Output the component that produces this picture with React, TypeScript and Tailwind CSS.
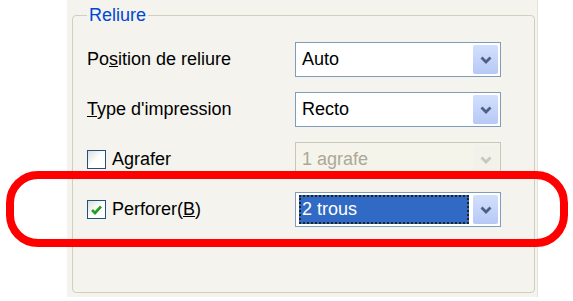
import React from "react";

function Chevron({ color = "#4D6185" }: { color?: string }) {
  return (
    <svg width="12" height="8" viewBox="0 0 12 8">
      <path d="M1.5 1.5 L6 6 L10.5 1.5" fill="none" stroke={color} strokeWidth="2.8" />
    </svg>
  );
}

function Combo({
  value,
  disabled = false,
  selected = false,
}: {
  value: string;
  disabled?: boolean;
  selected?: boolean;
}) {
  return (
    <div
      className={
        disabled
          ? "flex h-[35px] w-[206px] items-center border border-[#C9C7BA] bg-[#F5F4EA]"
          : "flex h-[35px] w-[206px] items-center border border-[#7F9DB9] bg-white"
      }
    >
      {selected ? (
        <div className="ml-[3px] mr-[4px] flex h-[29px] flex-1 items-center bg-[#316AC5] pl-[3px] text-white outline-2 outline-dotted outline-[#222] -outline-offset-2">
          {value}
        </div>
      ) : (
        <div className={disabled ? "flex-1 pl-[6px] text-[#ACA899]" : "flex-1 pl-[6px] text-black"}>{value}</div>
      )}
      <div
        className={
          disabled
            ? "mr-[2px] flex h-[29px] w-[25px] items-center justify-center rounded-[2px] bg-[#F3F2EA]"
            : "mr-[2px] flex h-[29px] w-[25px] items-center justify-center rounded-[2px] bg-gradient-to-b from-[#D3DFFD] to-[#B6C9F6]"
        }
      >
        <Chevron color={disabled ? "#C9C7BA" : "#4D6185"} />
      </div>
    </div>
  );
}

function Checkbox({ checked }: { checked: boolean }) {
  return (
    <div className="flex h-[19px] w-[19px] items-center justify-center border border-[#1C5180] bg-gradient-to-br from-[#DCDCD7] via-white to-white">
      {checked && (
        <svg width="13" height="12" viewBox="0 0 13 12">
          <path d="M2 6 L5 9 L11 2.5" fill="none" stroke="#21A121" strokeWidth="2.6" />
        </svg>
      )}
    </div>
  );
}

export default function App() {
  return (
    <div className="relative h-[301px] w-[573px] overflow-hidden bg-white font-['Liberation_Sans',Arial,sans-serif] text-[18px] text-black">
      <div className="ml-[67px] h-[297px] w-[471px] border-r border-[#E6E5DD] bg-[#F4F3EE] pl-[5px] pt-[5px]">
        <fieldset className="h-[288px] w-[463px] rounded-[4px] border border-[#D0D0BF] px-[14px] pt-[17px]">
          <legend className="px-[2px] leading-[20px] text-[#0046D5]">Reliure</legend>
          <div className="flex flex-col gap-[15px]">
            <div className="flex h-[35px] items-center">
              <div className="w-[208px]">
                Po<span className="underline">s</span>ition de reliure
              </div>
              <Combo value="Auto" />
            </div>
            <div className="flex h-[35px] items-center">
              <div className="w-[208px]">
                <span className="underline">T</span>ype d'impression
              </div>
              <Combo value="Recto" />
            </div>
            <div className="flex h-[35px] items-center">
              <div className="flex w-[208px] items-center gap-[6px]">
                <Checkbox checked={false} />
                <span>
                  A<span className="underline">g</span>rafer
                </span>
              </div>
              <Combo value="1 agrafe" disabled />
            </div>
            <div className="flex h-[35px] items-center">
              <div className="flex w-[208px] items-center gap-[6px]">
                <Checkbox checked />
                <span>
                  Perforer(<span className="underline">B</span>)
                </span>
              </div>
              <Combo value="2 trous" selected />
            </div>
          </div>
        </fieldset>
      </div>
      <div className="absolute left-[6px] top-[171px] h-[76px] w-[562px] rounded-[32px] border-[8px] border-[#FF0000]" />
    </div>
  );
}
